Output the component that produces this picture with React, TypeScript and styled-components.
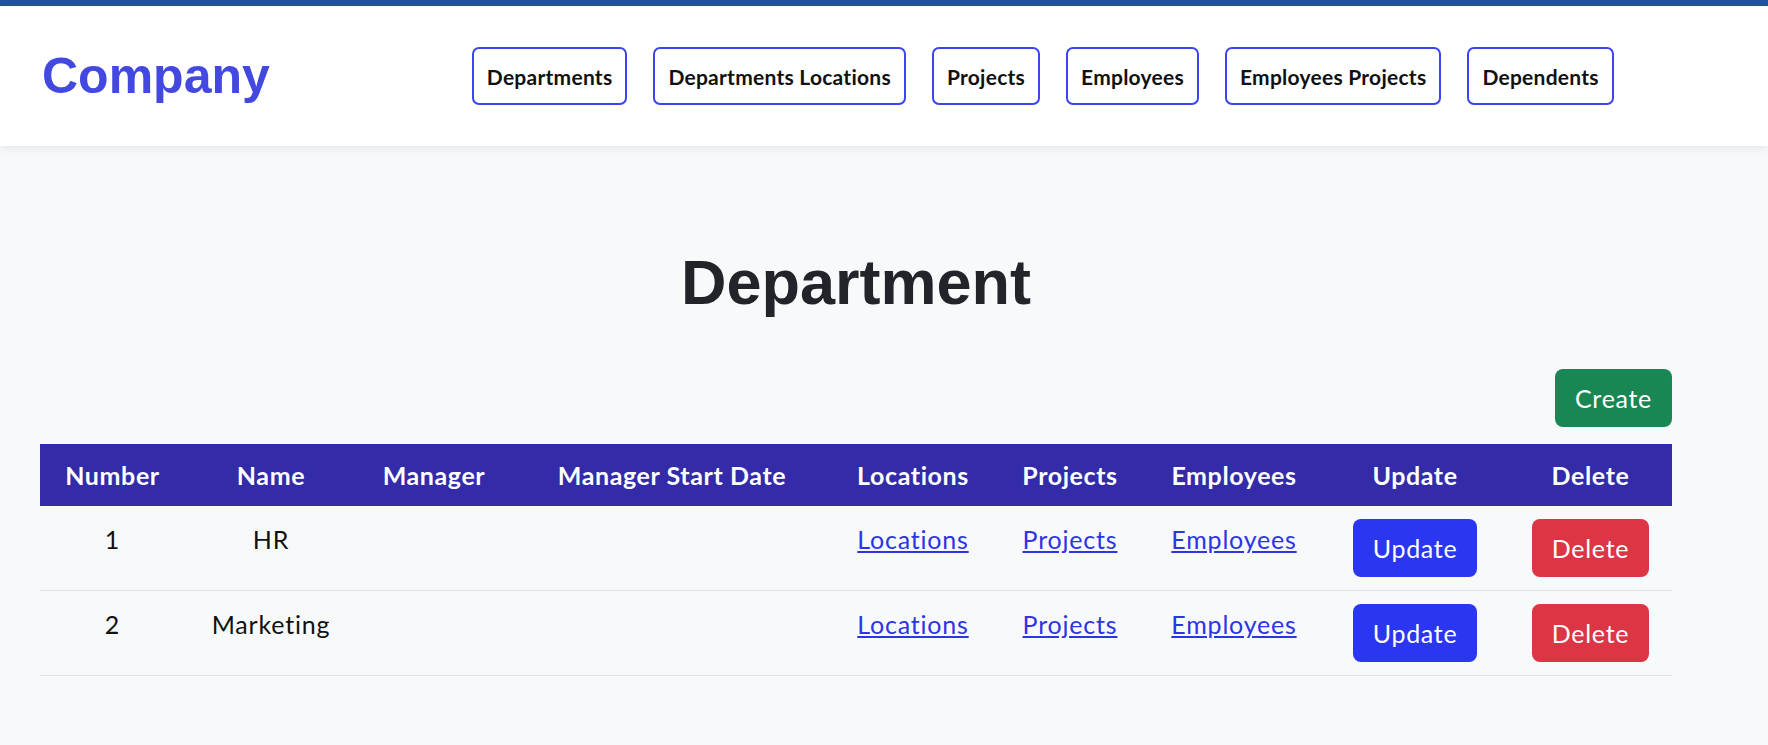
import styled, { createGlobalStyle } from 'styled-components';

type Department = {
  id: number;
  name: string;
  manager: string;
  managerStartDate: string;
};

const departments: Department[] = [
  { id: 1, name: 'HR', manager: '', managerStartDate: '' },
  { id: 2, name: 'Marketing', manager: '', managerStartDate: '' },
];

const navItems = [
  'Departments',
  'Departments Locations',
  'Projects',
  'Employees',
  'Employees Projects',
  'Dependents',
];

// column widths so the cells sit where the original table put them
const columns = [
  { label: 'Number', width: 145 },
  { label: 'Name', width: 172 },
  { label: 'Manager', width: 154 },
  { label: 'Manager Start Date', width: 322 },
  { label: 'Locations', width: 160 },
  { label: 'Projects', width: 154 },
  { label: 'Employees', width: 174 },
  { label: 'Update', width: 188 },
  { label: 'Delete', width: 163 },
];

export default function App() {
  return (
    <>
      <GlobalStyle />
      <TopBar />
      <Header>
        <Brand>Company</Brand>
        <Nav>
          {navItems.map((item) => (
            <NavButton key={item}>{item}</NavButton>
          ))}
        </Nav>
      </Header>

      <Main>
        <Title>Department</Title>
        <Toolbar>
          <ActionButton $variant="create">Create</ActionButton>
        </Toolbar>

        <Table>
          <colgroup>
            {columns.map((c) => (
              <col key={c.label} style={{ width: c.width }} />
            ))}
          </colgroup>
          <thead>
            <HeadRow>
              {columns.map((c) => (
                <HeadCell key={c.label}>{c.label}</HeadCell>
              ))}
            </HeadRow>
          </thead>
          <tbody>
            {departments.map((d) => (
              <tr key={d.id}>
                <Cell>{d.id}</Cell>
                <Cell>{d.name}</Cell>
                <Cell>{d.manager}</Cell>
                <Cell>{d.managerStartDate}</Cell>
                <Cell>
                  <TableLink href="#">Locations</TableLink>
                </Cell>
                <Cell>
                  <TableLink href="#">Projects</TableLink>
                </Cell>
                <Cell>
                  <TableLink href="#">Employees</TableLink>
                </Cell>
                <Cell $button>
                  <ActionButton $variant="update">Update</ActionButton>
                </Cell>
                <Cell $button>
                  <ActionButton $variant="delete">Delete</ActionButton>
                </Cell>
              </tr>
            ))}
          </tbody>
        </Table>
      </Main>
    </>
  );
}

const GlobalStyle = createGlobalStyle`
  body {
    margin: 0;
    background: #f8f9fa;
    font-family: Lato, "Noto Sans", sans-serif;
    color: #111;
  }
`;

// 一番上の細い帯
const TopBar = styled.div`
  height: 6px;
  background: #215497;
`;

const Header = styled.header`
  display: flex;
  align-items: center;
  height: 140px;
  padding-left: 42px;
  background: #fff;
  box-shadow: 0 3px 8px rgba(0, 0, 0, 0.07);
`;

const Brand = styled.div`
  font-family: 'Liberation Sans', Arial, sans-serif;
  font-weight: 700;
  font-size: 50px;
  color: #4348e1;
`;

const Nav = styled.nav`
  display: flex;
  gap: 26px;
  margin-left: 202px;
`;

const NavButton = styled.button`
  height: 58px;
  padding: 0 13px;
  border: 2px solid #3a45ef;
  border-radius: 7px;
  background: #fff;
  font-family: Lato, 'Noto Sans', sans-serif;
  font-size: 21px;
  letter-spacing: 0.25px;
  font-weight: 700;
  color: #111;
  cursor: pointer;
`;

const Main = styled.main`
  width: 1632px;
  margin-left: 40px;
`;

const Title = styled.h1`
  margin: 100px 0 0;
  font-family: 'Liberation Sans', Arial, sans-serif;
  font-size: 63px;
  line-height: 72px;
  font-weight: 700;
  text-align: center;
  color: #212529;
`;

const Toolbar = styled.div`
  display: flex;
  justify-content: flex-end;
  margin: 51px 0 17px;
`;

const buttonColors = {
  create: '#198754',
  update: '#2b36f0',
  delete: '#dc3545',
};

const ActionButton = styled.button<{ $variant: keyof typeof buttonColors }>`
  height: 58px;
  padding: 0 20px;
  border: none;
  border-radius: 8px;
  background: ${(p) => buttonColors[p.$variant]};
  color: #fff;
  font-family: Lato, 'Noto Sans', sans-serif;
  font-size: 25px;
  letter-spacing: 0.7px;
  line-height: 36px;
  cursor: pointer;
`;

const Table = styled.table`
  width: 1632px;
  table-layout: fixed;
  border-collapse: collapse;
  font-size: 25px;
`;

const HeadRow = styled.tr`
  background: #332ba8;
`;

const HeadCell = styled.th`
  height: 62px;
  padding: 0;
  color: #fff;
  font-weight: 700;
  letter-spacing: 0.6px;
  text-align: center;
  line-height: 36px;
`;

// テキストのセルはボタンのセルより少し下から始まる
const Cell = styled.td<{ $button?: boolean }>`
  padding: ${(p) => (p.$button ? '13px 0' : '15px 0 13px')};
  vertical-align: top;
  text-align: center;
  line-height: 36px;
  letter-spacing: 0.8px;
  border-bottom: 1px solid #dee2e6;
`;

const TableLink = styled.a`
  color: #2b35e6;
  text-decoration: underline;
`;
